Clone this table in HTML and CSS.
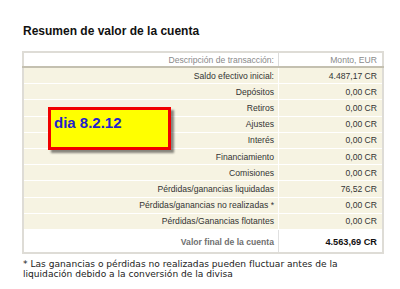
FILE: index.html
```html
<!DOCTYPE html>
<html lang="es">
<head>
<meta charset="utf-8">
<title>Resumen de valor de la cuenta</title>
<link rel="stylesheet" href="styles.css">
</head>
<body>
<div class="page">
  <h1 class="title">Resumen de valor de la cuenta</h1>
  <table class="summary">
    <thead>
      <tr><th class="lbl">Descripción de transacción:</th><th class="val">Monto, EUR</th></tr>
    </thead>
    <tbody>
      <tr><td class="lbl">Saldo efectivo inicial:</td><td class="val">4.487,17 CR</td></tr>
      <tr><td class="lbl">Depósitos</td><td class="val">0,00 CR</td></tr>
      <tr><td class="lbl">Retiros</td><td class="val">0,00 CR</td></tr>
      <tr><td class="lbl">Ajustes</td><td class="val">0,00 CR</td></tr>
      <tr><td class="lbl">Interés</td><td class="val">0,00 CR</td></tr>
      <tr><td class="lbl">Financiamiento</td><td class="val">0,00 CR</td></tr>
      <tr><td class="lbl">Comisiones</td><td class="val">0,00 CR</td></tr>
      <tr><td class="lbl">Pérdidas/ganancias liquidadas</td><td class="val">76,52 CR</td></tr>
      <tr><td class="lbl">Pérdidas/ganancias no realizadas *</td><td class="val">0,00 CR</td></tr>
      <tr><td class="lbl">Pérdidas/Ganancias flotantes</td><td class="val">0,00 CR</td></tr>
    </tbody>
    <tfoot>
      <tr><td class="lbl">Valor final de la cuenta</td><td class="val">4.563,69 CR</td></tr>
    </tfoot>
  </table>
  <p class="note">* Las ganancias o pérdidas no realizadas pueden fluctuar antes de la<br>liquidación debido a la conversión de la divisa</p>
  <div class="sticker">dia 8.2.12</div>
</div>
</body>
</html>
```

FILE: styles.css
```css
html, body {
  margin: 0;
  padding: 0;
  background: #ffffff;
}

.page {
  position: relative;
  width: 362px;
  margin-left: 22px;
  padding-top: 24px;
  font-family: "Liberation Sans", Arial, sans-serif;
}

.title {
  margin: 0 0 13px 1px;
  font-size: 12px;
  line-height: 14px;
  font-weight: bold;
  color: #111;
}

.summary {
  width: 362px;
  border-collapse: collapse;
  border: 2px solid #dedcd6;
  font-size: 8.6px;
  color: #333;
}

.summary th,
.summary td {
  padding: 0 4px 0 0;
  white-space: nowrap;
}

.summary .lbl {
  width: 250px;
  text-align: right;
}

.summary .val {
  text-align: right;
  padding-right: 5px;
}

.summary thead th {
  height: 13px;
  font-weight: normal;
  color: #8a8a8a;
  background: #fff;
  border-bottom: 2px solid #c4c0b0;
  border-top: 1px solid #fff;
}

.summary thead th.lbl {
  border-right: 1px solid #dcdcdc;
}

.summary tbody td {
  height: 15.2px;
  background: #f6f3e2;
  border-bottom: 1px solid #ffffff;
}

.summary tbody td.lbl {
  border-right: 1px solid #ffffff;
}

.summary tfoot td {
  height: 20px;
  background: #fff;
  font-weight: bold;
  padding-top: 2px;
}

.summary tfoot td.lbl {
  color: #707070;
  border-right: 1px solid #e0e0e0;
}

.summary tfoot td.val {
  color: #111;
  font-size: 9.2px;
}

.note {
  margin: 5px 0 0 1px;
  font-family: "DejaVu Sans", Verdana, sans-serif;
  font-size: 9.1px;
  line-height: 10px;
  color: #222;
}

.sticker {
  position: absolute;
  left: 26px;
  top: 107px;
  width: 114px;
  height: 32px;
  padding: 5px 0 0 3px;
  box-sizing: content-box;
  background: #ffff00;
  border: 3px solid #f00000;
  box-shadow: 3px 3px 2px rgba(0, 0, 0, 0.45);
  color: #2222cc;
  font-size: 15px;
  font-weight: bold;
  line-height: 15px;
}
```
